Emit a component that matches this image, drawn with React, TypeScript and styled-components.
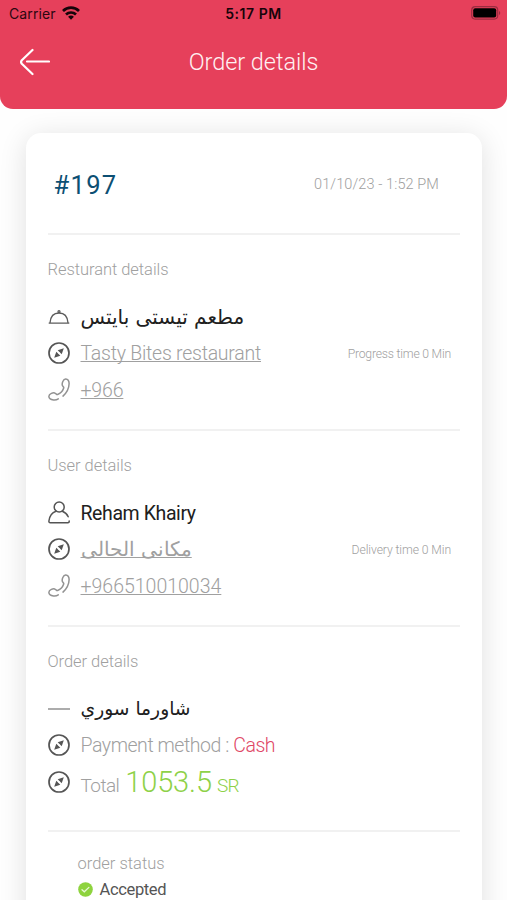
import React from 'react';
import styled, { createGlobalStyle } from 'styled-components';

const GlobalStyle = createGlobalStyle`
  *, *::before, *::after { box-sizing: border-box; }
  html, body { margin: 0; background: #fefefe; }
  body { height: 900px; overflow: hidden; }
`;

const Screen = styled.main`
  width: 507px;
  height: 900px;
  overflow: hidden;
  background: #fefefe;
  font-family: Roboto, 'Noto Sans', 'DejaVu Sans', sans-serif;
  color: #a0a0a0;
`;

const Header = styled.header`
  height: 108.5px;
  background: #e6405b;
  border-radius: 0 0 13px 13px;
`;

const StatusBar = styled.div`
  height: 28px;
  padding: 0 6px 0 9px;
  display: grid;
  grid-template-columns: 1fr auto 1fr;
  align-items: center;
  font-family: Inter, 'Liberation Sans', sans-serif;
  font-size: 14px;
  line-height: 26px;
  color: #2b0710;

  svg { display: block; margin-top: -2px; }
`;

const Carrier = styled.span`
  display: flex;
  align-items: center;
  gap: 6px;
  letter-spacing: 0.1px;
`;

const Clock = styled.span`
  margin-right: 3px;
  font-weight: 600;
  letter-spacing: 0.55px;
  color: #16040a;
`;

const BatterySlot = styled.span`
  display: flex;
  justify-content: flex-end;
`;

const TitleBar = styled.div`
  height: 68px;
  padding: 0 20px;
  display: grid;
  grid-template-columns: 30px 1fr 30px;
  align-items: center;
`;

const Title = styled.h1`
  margin: 0;
  text-align: center;
  font-size: 23.5px;
  font-weight: 350;
  letter-spacing: -0.05px;
  color: #fff0f2;
`;

const Card = styled.section`
  margin: 24.5px 25px 0 26px;
  height: 900px;
  padding: 0 22px 0 21.5px;
  background: #fff;
  border-radius: 15px;
  box-shadow: 0 4px 28px rgba(0, 0, 0, 0.12);
`;

const OrderHead = styled.div`
  height: 102px;
  padding: 3px 21px 0 6px;
  display: flex;
  align-items: center;
  justify-content: space-between;
  border-bottom: 2px solid #f1f1f1;
`;

const OrderNumber = styled.h2`
  margin: 0;
  font-size: 25.5px;
  font-weight: 400;
  letter-spacing: 1.3px;
  color: #0c4f73;
`;

const OrderDate = styled.span`
  font-size: 14.5px;
  font-weight: 350;
  letter-spacing: 0.1px;
`;

const Section = styled.section<{ $height: number }>`
  height: ${(p) => p.$height}px;
  padding-top: 23px;
  border-bottom: 2px solid #f1f1f1;
`;

const SectionTitle = styled.h3<{ $track?: number }>`
  margin: 0 0 17px;
  height: 24px;
  line-height: 24px;
  font-size: 16.5px;
  font-weight: 350;
  letter-spacing: ${(p) => p.$track ?? -0.05}px;
`;

const Row = styled.div`
  height: 36.6px;
  padding-right: 9px;
  display: grid;
  grid-template-columns: 22px 1fr auto;
  column-gap: 11px;
  align-items: center;
  white-space: nowrap;

  svg { display: block; margin-top: -1px; }
`;

const Name = styled.span<{ $track?: number }>`
  font-size: 19.5px;
  font-weight: 380;
  letter-spacing: ${(p) => p.$track ?? 0}px;
  color: #202020;
`;

const ArabicName = styled.span<{ $size: number }>`
  justify-self: start;
  direction: rtl;
  font-family: 'DejaVu Sans', sans-serif;
  font-size: ${(p) => p.$size}px;
  line-height: 30px;
  color: #202020;
`;

const Link = styled.a<{ $track?: number }>`
  justify-self: start;
  font-size: 19.5px;
  font-weight: 350;
  letter-spacing: ${(p) => p.$track ?? 0}px;
  text-decoration: underline;
  text-decoration-thickness: 1px;
  text-decoration-skip-ink: none;
  text-underline-offset: 1px;
`;

const ArabicLink = styled(Link)<{ $size: number }>`
  direction: rtl;
  font-family: 'DejaVu Sans', sans-serif;
  font-size: ${(p) => p.$size}px;
  line-height: 30px;
`;

const Timing = styled.span<{ $track?: number }>`
  font-size: 12.2px;
  font-weight: 350;
  letter-spacing: ${(p) => p.$track ?? 0}px;
`;

const Label = styled.span<{ $track?: number }>`
  font-size: 19.5px;
  font-weight: 350;
  letter-spacing: ${(p) => p.$track ?? 0}px;
`;

const Method = styled.span`
  color: #e04765;
`;

const TotalLine = styled.span`
  display: flex;
  align-items: baseline;
  gap: 6px;
  font-size: 19px;
  font-weight: 350;
  letter-spacing: -0.6px;
`;

const Amount = styled.span`
  display: inline-flex;
  align-items: baseline;
  gap: 5px;
  color: #8ed148;
`;

const Figure = styled.span`
  font-size: 29px;
  letter-spacing: -0.1px;
`;

const Status = styled.div`
  padding: 18.5px 0 0 30px;
`;

const StatusTitle = styled.div`
  height: 26px;
  line-height: 26px;
  font-size: 16.5px;
  font-weight: 350;
`;

const StatusValue = styled.div`
  height: 25px;
  display: flex;
  align-items: center;
  gap: 7px;
  font-size: 16.5px;
  font-weight: 380;
  letter-spacing: -0.35px;
  color: #555;
`;

const WifiIcon = () => (
  <svg width="18" height="14" viewBox="0 0 18 14" fill="none" stroke="#16040a" strokeWidth="2.7">
    <path d="M1 5C5.500.6 12.500.6 17 5" />
    <path d="M4 8.500c2.800-2.700 7.200-2.700 10 0" />
    <path d="M6.100 10.700c1.700-1.500 4.100-1.500 5.800 0L9 13.700Z" fill="#16040a" stroke="none" />
  </svg>
);

const BatteryIcon = () => (
  <svg width="30" height="14" viewBox="0 0 30 14">
    <rect x="0.700" y="0.700" width="26" height="12.400" rx="3.500" fill="none" stroke="#9c2c40" strokeWidth="1.200" />
    <rect x="2.200" y="2.200" width="23" height="9.400" rx="2" fill="#000" />
    <path d="M28 5v4c1.700-.6 1.700-3.400 0-4Z" fill="#9c2c40" />
  </svg>
);

const BackIcon = () => (
  <svg width="30" height="28" viewBox="0 0 30 28" fill="none" stroke="#fff" strokeWidth="2.200" strokeLinecap="round" strokeLinejoin="round">
    <path d="M12.500 2 1.800 12.300q-1.400 1.700 0 3.400L12.500 26M7 13.500h22" />
  </svg>
);

const DishIcon = () => (
  <svg width="22" height="16" viewBox="0 0 22 16" fill="none" stroke="#5c5c5c" strokeWidth="1.300" strokeLinejoin="round">
    <path d="M.7 14.100h20.600M2 13.800C2.500 7.500 6 4 11 4s8.500 3.500 9 9.800" />
    <circle cx="11" cy="2.700" r="1" />
  </svg>
);

const CompassIcon = () => (
  <svg width="22" height="22" viewBox="0 0 22 22" fill="none" stroke="#555" strokeWidth="1.700">
    <circle cx="11" cy="11" r="10" />
    <path d="m15.800 6.200-2.100 6.100-4-4Z" fill="#555" stroke="none" />
    <path d="m6.200 15.800 2.100-6.100 4 4Z" fill="#555" stroke="none" />
    <circle cx="11" cy="11" r=".8" fill="#fff" stroke="none" />
  </svg>
);

const PhoneIcon = () => (
  <svg width="22" height="23" viewBox="0 0 22 23" fill="none" stroke="#929292" strokeWidth="1.500" strokeLinecap="round" strokeLinejoin="round">
    <path d="M10.300 20.800c-1.500 1-3.300 1.300-4.800 1.100C2.900 21.600.8 20.300.9 18.300c.1-2.400 4.400-4.300 6.500-3 .9.500 1.100 1.600 2.200 1.200 2.500-.9 5.300-3.900 6.100-6.400.4-1.300-.9-1.400-1.300-2.500-.8-2.300.9-6.500 3.200-6.700 2.200-.2 3.600 2.200 3.500 4.800-.1 4.300-2.500 9-6.100 12.400" />
  </svg>
);

const PersonIcon = () => (
  <svg width="22" height="23" viewBox="0 0 22 23" fill="none" stroke="#555" strokeWidth="1.500" strokeLinecap="round" strokeLinejoin="round">
    <circle cx="11.200" cy="6" r="5" />
    <path d="M8 10.300C4 11.700 1.500 15.300.9 20c-.1 1 .4 1.700 1.400 1.700h17.500c1.200 0 1.500-.7 1.400-1.700M14.300 10.300c2.800 1 4.700 2.800 5.900 5.400" />
  </svg>
);

const DashIcon = () => (
  <svg width="22" height="4" viewBox="0 0 22 4">
    <path d="M0 2h22" stroke="#a3a3a3" strokeWidth="1.800" />
  </svg>
);

const CheckIcon = () => (
  <svg width="15" height="15" viewBox="0 0 15 15">
    <circle cx="7.500" cy="7.500" r="7.300" fill="#8ed33e" />
    <path d="m4 7.700 2.300 2.100 4.600-4.400" fill="none" stroke="#e9f8d9" strokeWidth="1.300" strokeLinecap="round" />
  </svg>
);

export default function App() {
  return (
    <>
      <GlobalStyle />
      <Screen>
        <Header>
          <StatusBar>
            <Carrier>Carrier <WifiIcon /></Carrier>
            <Clock>5:17 PM</Clock>
            <BatterySlot><BatteryIcon /></BatterySlot>
          </StatusBar>
          <TitleBar>
            <BackIcon />
            <Title>Order details</Title>
          </TitleBar>
        </Header>
        <Card>
          <OrderHead>
            <OrderNumber>#197</OrderNumber>
            <OrderDate>01/10/23 - 1:52 PM</OrderDate>
          </OrderHead>
          <Section $height={196}>
            <SectionTitle>Resturant details</SectionTitle>
            <Row>
              <DishIcon />
              <ArabicName $size={20}>مطعم تيستى بايتس</ArabicName>
            </Row>
            <Row>
              <CompassIcon />
              <Link $track={-0.25}>Tasty Bites restaurant</Link>
              <Timing $track={-0.2}>Progress time 0 Min</Timing>
            </Row>
            <Row>
              <PhoneIcon />
              <Link $track={-0.15}>+966</Link>
            </Row>
          </Section>
          <Section $height={196}>
            <SectionTitle>User details</SectionTitle>
            <Row>
              <PersonIcon />
              <Name $track={-0.4}>Reham Khairy</Name>
            </Row>
            <Row>
              <CompassIcon />
              <ArabicLink $size={19.6}>مكانى الحالى</ArabicLink>
              <Timing $track={-0.1}>Delivery time 0 Min</Timing>
            </Row>
            <Row>
              <PhoneIcon />
              <Link>+966510010034</Link>
            </Row>
          </Section>
          <Section $height={205}>
            <SectionTitle>Order details</SectionTitle>
            <Row>
              <DashIcon />
              <ArabicName $size={18.7}>شاورما سوري</ArabicName>
            </Row>
            <Row>
              <CompassIcon />
              <Label $track={-0.45}>Payment method : <Method>Cash</Method></Label>
            </Row>
            <Row>
              <CompassIcon />
              <TotalLine>
                Total
                <Amount><Figure>1053.5</Figure> SR</Amount>
              </TotalLine>
            </Row>
          </Section>
          <Status>
            <StatusTitle>order status</StatusTitle>
            <StatusValue><CheckIcon />Accepted</StatusValue>
          </Status>
        </Card>
      </Screen>
    </>
  );
}
